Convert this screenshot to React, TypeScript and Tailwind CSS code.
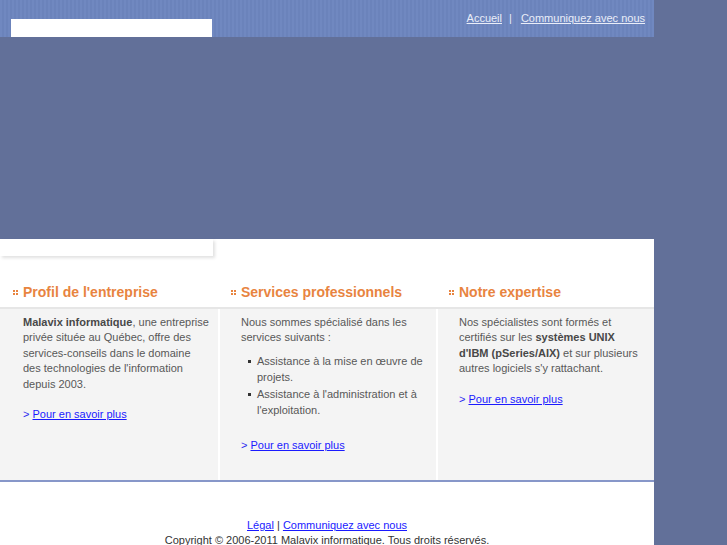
import React from "react";

// Small 2x2 dot marker in front of section titles
function Dots() {
  return (
    <svg width="5" height="5" viewBox="0 0 5 5" className="mr-[5px] inline-block">
      <rect x="0" y="0" width="2" height="2" fill="#e8843f" />
      <rect x="3" y="0" width="2" height="2" fill="#e8843f" />
      <rect x="0" y="3" width="2" height="2" fill="#e8843f" />
      <rect x="3" y="3" width="2" height="2" fill="#e8843f" />
    </svg>
  );
}

function MoreLink() {
  return (
    <p className="text-[#2b2bf0]">
      &gt; <a href="#" className="underline text-[#1a1aff]">Pour en savoir plus</a>
    </p>
  );
}

const titles = ["Profil de l'entreprise", "Services professionnels", "Notre expertise"];

export default function App() {
  return (
    <div className="min-h-screen bg-[#627099] font-['Liberation_Sans',Arial,sans-serif] text-[11px] leading-[1.4]">
      <div className="w-[654px]">
        {/* Top bar */}
        <div className="h-[37px] flex justify-between bg-[repeating-linear-gradient(90deg,#7088c0_0px,#7088c0_2px,#6b83bb_2px,#6b83bb_4px)]">
          <div className="mt-[19px] ml-[11px] w-[201px] h-[18px] bg-white" />
          <div className="pt-[11px] pr-[9px] text-[#e9edf8]">
            <a href="#" className="underline">Accueil</a>
            <span className="ml-[7px] mr-[9px]">|</span>
            <a href="#" className="underline">Communiquez avec nous</a>
          </div>
        </div>

        {/* Banner area */}
        <div className="h-[202px] bg-[#627099]" />

        {/* Main */}
        <div className="bg-white">
          <div className="w-[213px] h-[17px] bg-white shadow-[2px_2px_3px_rgba(0,0,0,0.12)]" />

          <div className="grid grid-cols-3 pt-[26px] pb-[5px] border-b-2 border-[#e6e6e6]">
            {titles.map((t) => (
              <h2
                key={t}
                className="flex items-center pl-[13px] text-[14px] leading-[20px] font-bold text-[#e8843f]"
              >
                <Dots />
                {t}
              </h2>
            ))}
          </div>

          <div className="grid grid-cols-3 h-[171px] text-[#585858]">
            <div className="bg-[#f4f4f4] pl-[23px] pr-[8px] pt-[6px]">
              <p className="mb-[15px]">
                <b className="text-[#484848]">Malavix informatique</b>, une entreprise privée
                située au Québec, offre des services-conseils dans le domaine des
                technologies de l'information depuis 2003.
              </p>
              <MoreLink />
            </div>
            <div className="bg-[#f4f4f4] border-l-2 border-white pl-[21px] pr-[8px] pt-[6px]">
              <p>Nous sommes spécialisé dans les services suivants :</p>
              <ul className="mt-[7px] mb-[20px] pl-[16px] flex flex-col gap-[1px] leading-[16px]">
                <li className="relative">
                  <span className="absolute left-[-9px] top-[7px] w-[3px] h-[3px] bg-[#333]" />
                  Assistance à la mise en œuvre de projets.
                </li>
                <li className="relative">
                  <span className="absolute left-[-9px] top-[7px] w-[3px] h-[3px] bg-[#333]" />
                  Assistance à l'administration et à l'exploitation.
                </li>
              </ul>
              <MoreLink />
            </div>
            <div className="bg-[#f4f4f4] border-l-2 border-white pl-[21px] pr-[8px] pt-[6px]">
              <p className="mb-[15px]">
                Nos spécialistes sont formés et certifiés sur les{" "}
                <b className="text-[#484848]">systèmes UNIX d'IBM (pSeries/AIX)</b> et sur
                plusieurs autres logiciels s'y rattachant.
              </p>
              <MoreLink />
            </div>
          </div>

          {/* Footer */}
          <div className="border-t-2 border-[#8797c9] pt-[36px] pb-[20px] text-center text-[#333]">
            <p>
              <a href="#" className="underline text-[#1a1aff]">Légal</a> |{" "}
              <a href="#" className="underline text-[#1a1aff]">Communiquez avec nous </a>
            </p>
            <p>Copyright © 2006-2011 Malavix informatique. Tous droits réservés.</p>
          </div>
        </div>
      </div>
    </div>
  );
}
